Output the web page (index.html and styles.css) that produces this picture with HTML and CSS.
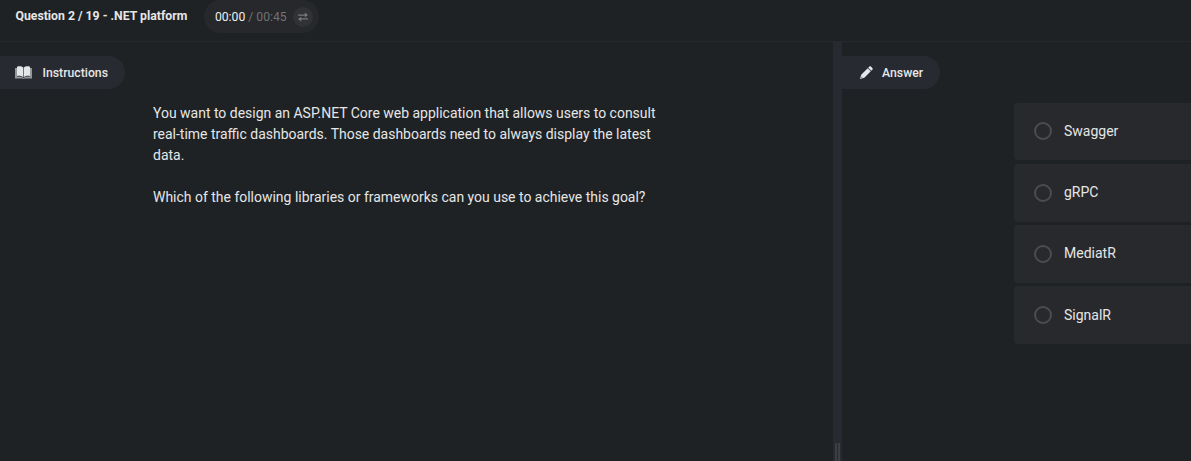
FILE: index.html
```html
<!DOCTYPE html>
<html lang="en">
<head>
<meta charset="utf-8">
<title>.NET platform</title>
<link rel="stylesheet" href="styles.css">
</head>
<body>
<header class="topbar">
  <h1 class="title">Question 2 / 19 - .NET platform</h1>
  <div class="timer">
    <span class="time"><span class="elapsed">00:00</span> / 00:45</span>
    <span class="swap"><svg width="10" height="10" viewBox="0 0 10 10"><path d="M0 2.400h6.800V.600L10 3.100 6.800 5.400V3.700H0zM10 6.200H3.200V4.700L0 7.100l3.200 2.400V7.600H10z"/></svg></span>
  </div>
</header>
<main class="workspace">
  <section class="instructions">
    <div class="tab tab-instructions">
      <svg class="book" width="17" height="13" viewBox="0 0 17 13"><path class="cover" d="M0 2h2v8.600c2.600-.3 4.700.1 6.500 1.300 1.800-1.200 3.900-1.600 6.500-1.300V2h2v10.600H9.800L8.500 13l-1.300-.4H0z"/><path d="M2 .7C4.500 0 6.900.3 8.200 1.600v9.600C6.500 10 4.500 9.500 2 9.900zM15 .7C12.500 0 10.100.3 8.800 1.600v9.600c1.700-1.200 3.700-1.700 6.200-1.300z"/></svg>
      <span>Instructions</span>
    </div>
    <div class="question">
      <p>You want to design an ASP.NET Core web application that allows users to consult<br>real-time traffic dashboards. Those dashboards need to always display the latest<br>data.</p>
      <p>Which of the following libraries or frameworks can you use to achieve this goal?</p>
    </div>
  </section>
  <div class="splitter"><span class="grip"></span></div>
  <section class="answer">
    <div class="tab tab-answer">
      <svg width="13" height="13" viewBox="0 0 13 13"><path d="M9.200.700c.600-.600 1.300-.600 1.900 0l1.200 1.200c.600.600.600 1.300 0 1.900l-1 1-3.100-3.100zM7.700 2.200l3.100 3.100-6.500 6.400L0 13l1.200-4.300zM1.700 10.600l-.4 1.200 1.200-.4z" fill-rule="evenodd"/></svg>
      <span>Answer</span>
    </div>
    <div class="options">
      <div class="option"><span class="radio"></span><span>Swagger</span></div>
      <div class="option"><span class="radio"></span><span>gRPC</span></div>
      <div class="option"><span class="radio"></span><span>MediatR</span></div>
      <div class="option"><span class="radio"></span><span>SignalR</span></div>
    </div>
  </section>
</main>
</body>
</html>
```

FILE: styles.css
```css
* { box-sizing: border-box; }
body {
  margin: 0;
  height: 461px;
  display: flex;
  flex-direction: column;
  overflow: hidden;
  background: #1e2224;
  color: #e6e6e7;
  font-family: Roboto, "Liberation Sans", sans-serif;
}
svg { display: block; flex: none; fill: #e4e6e9; }
.topbar {
  height: 42px;
  flex: none;
  display: flex;
  align-items: flex-start;
  padding-left: 15.5px;
  border-bottom: 1px solid #26292c;
}
.title {
  margin: 0;
  width: 188.9px;
  font-size: 12.25px;
  font-weight: 700;
  line-height: 32px;
  white-space: nowrap;
}
.timer {
  width: 115px;
  height: 33px;
  display: flex;
  align-items: center;
  padding-left: 10.5px;
  border-radius: 17px;
  background: #26282b;
}
.time { width: 78px; font-size: 12.2px; color: #707274; white-space: nowrap; }
.elapsed { color: #eeeeef; }
.swap {
  width: 20px;
  height: 20px;
  display: flex;
  align-items: center;
  justify-content: center;
  border-radius: 50%;
  background: #303235;
}
.swap svg { fill: #77797d; }
.workspace { flex: 1; display: flex; min-height: 0; }
.instructions { width: 833px; flex: none; padding-top: 14px; }
.tab {
  height: 33px;
  display: flex;
  align-items: center;
  border-radius: 0 17px 17px 0;
  background: #272a30;
  font-size: 12.25px;
  font-weight: 500;
  white-space: nowrap;
}
.tab-instructions { width: 125px; padding-left: 15px; gap: 10.5px; }
.tab-answer { width: 98px; padding-left: 18px; gap: 9px; }
.cover { fill: #94979b; }
.question { padding: 14px 0 0 153px; font-size: 13.97px; line-height: 21px; white-space: nowrap; }
.question p { margin: 0 0 21px; }
.splitter {
  width: 9px;
  flex: none;
  display: flex;
  align-items: flex-end;
  justify-content: center;
  background: #272a31;
}
.grip { width: 5px; height: 18px; border: solid #3c3f44; border-width: 0 2px; }
.answer { flex: 1; padding-top: 14px; min-width: 0; }
.options { margin: 13.5px 0 0 172.4px; display: flex; flex-direction: column; gap: 3.5px; }
.option {
  height: 57.75px;
  display: flex;
  align-items: center;
  gap: 12px;
  padding-left: 19.6px;
  border-radius: 4px 0 0 4px;
  background: #28292c;
  font-size: 14px;
  line-height: 17px;
}
.radio { width: 18px; height: 18px; border: 2px solid #4b4c50; border-radius: 50%; }
```
